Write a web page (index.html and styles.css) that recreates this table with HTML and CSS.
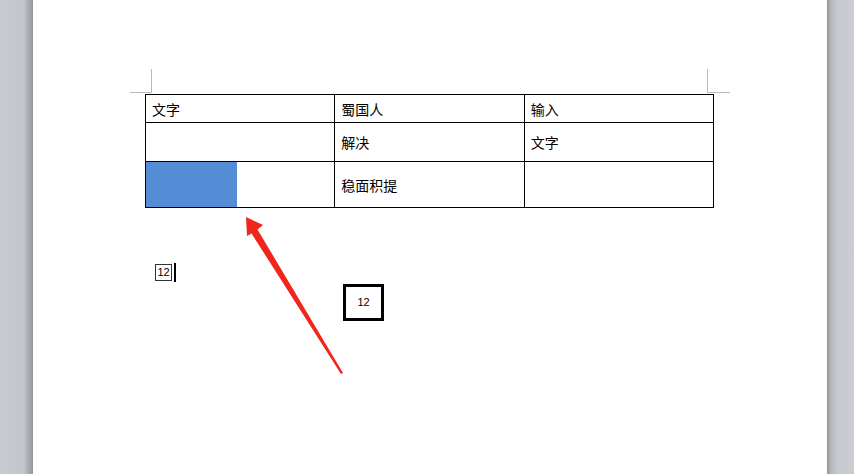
FILE: index.html
```html
<!DOCTYPE html>
<html>
<head>
<meta charset="utf-8">
<link rel="stylesheet" href="styles.css">
</head>
<body>
<div class="desk">
  <div class="gutter gutter-left"></div>
  <div class="page">
    <div class="marks">
      <div class="mark mark-left"></div>
      <div class="mark mark-right"></div>
    </div>
    <table class="doc-table">
      <tr class="r1">
        <td>文字</td>
        <td>蜀国人</td>
        <td>输入</td>
      </tr>
      <tr class="r2">
        <td></td>
        <td>解决</td>
        <td>文字</td>
      </tr>
      <tr class="r3">
        <td class="fill-cell"><div class="fill"></div></td>
        <td>稳面积提</td>
        <td></td>
      </tr>
    </table>
    <div class="line-one">
      <span class="small-box">12</span><span class="cursor"></span>
    </div>
    <div class="line-two">
      <div class="big-box">12</div>
    </div>
    <svg class="arrow" width="794" height="474" viewBox="0 0 794 474">
      <polygon fill="#f0261c" points="213,217 230,225 224.5,229.5 310,373 308,374 218.5,233.5 214,236"/>
    </svg>
  </div>
  <div class="gutter gutter-right"></div>
</div>
</body>
</html>
```
FILE: styles.css
```css
html, body {
  margin: 0;
  padding: 0;
  height: 100%;
}
body {
  background: #c9cdd2;
  font-family: "Noto Sans CJK SC", "Noto Sans", sans-serif;
  overflow: hidden;
}
.desk {
  display: flex;
  height: 474px;
}
.gutter {
  height: 100%;
}
.gutter-left {
  width: 33px;
  background: linear-gradient(to right, #c7cbd0 0px, #c3c7cc 24px, #b0b4b9 27px, #9ea2a7 31px, #8f9398 33px);
}
.gutter-right {
  flex: 1;
  background: linear-gradient(to right, #8f9398 0px, #a4a8ad 2px, #b8bcc1 5px, #c6cacf 10px, #c9cdd2 27px);
}
.page {
  position: relative;
  width: 794px;
  background: #ffffff;
  padding-top: 69px;
  box-sizing: border-box;
}
.marks {
  display: flex;
  justify-content: space-between;
  margin-left: 97px;
  width: 600px;
  height: 24px;
}
.mark {
  width: 22px;
  height: 24px;
  box-sizing: border-box;
  border-bottom: 1px solid #b9b9b9;
}
.mark-left {
  border-right: 1px solid #b9b9b9;
}
.mark-right {
  width: 23px;
  border-left: 1px solid #b9b9b9;
}
.doc-table {
  margin-left: 112px;
  margin-top: 1px;
  border-collapse: collapse;
  width: 569px;
  table-layout: fixed;
  font-size: 14px;
  color: #000;
}
.doc-table td {
  border: 1px solid #000;
  padding: 0 0 0 6px;
  vertical-align: middle;
  line-height: 16px;
}
.r1 td { height: 27px; }
.r2 td { height: 38px; }
.r3 td { height: 45px; }
.doc-table td.fill-cell {
  padding: 0;
}
.fill {
  width: 91px;
  height: 45px;
  background: #548dd5;
}
.line-one {
  display: flex;
  align-items: center;
  margin-left: 122px;
  margin-top: 55px;
  height: 19px;
}
.small-box {
  display: inline-block;
  width: 17px;
  height: 17px;
  box-sizing: border-box;
  border: 1px solid #333;
  font-family: "Liberation Sans", sans-serif;
  font-size: 11px;
  line-height: 15px;
  text-align: center;
  color: #000;
}
.cursor {
  display: inline-block;
  width: 2px;
  height: 19px;
  margin-left: 2px;
  background: #000;
}
.line-two {
  margin-left: 310px;
  margin-top: 2px;
}
.big-box {
  width: 41px;
  height: 37px;
  box-sizing: border-box;
  border: 3px solid #000;
  font-family: "Liberation Sans", sans-serif;
  font-size: 11px;
  line-height: 31px;
  text-align: center;
  color: #000;
}
.arrow {
  position: absolute;
  left: 0;
  top: 0;
  pointer-events: none;
}
```
